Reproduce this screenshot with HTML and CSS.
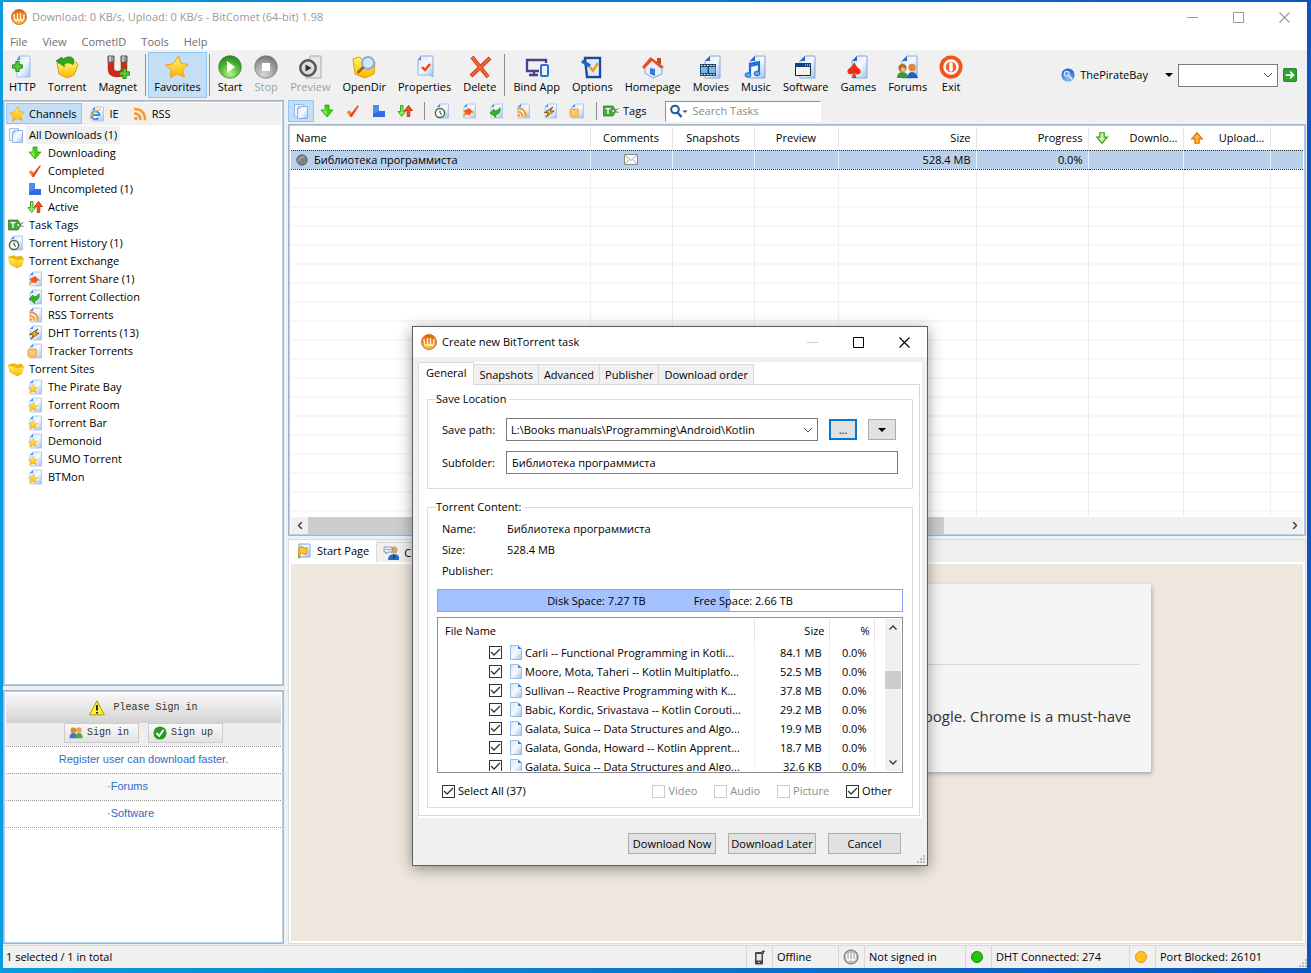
FILE: index.html
```html
<!DOCTYPE html>
<html lang="en">
<head>
    <meta charset="UTF-8">
    <title>BitComet (64-bit) 1.98</title>
    <link rel="stylesheet" href="styles.css">
</head>
<body>
    <svg class="sprite" aria-hidden="true">
        <defs>
            <linearGradient id="gPage" x1="0" y1="0" x2="1" y2="1"><stop offset="0" stop-color="#d3e4fa"/><stop offset=".5" stop-color="#f6faff"/><stop offset="1" stop-color="#9fc0ee"/></linearGradient>
            <linearGradient id="gGold" x1="0" y1="0" x2="0" y2="1"><stop offset="0" stop-color="#fff36a"/><stop offset="1" stop-color="#ffb400"/></linearGradient>
            <linearGradient id="gLogo" x1="0" y1="0" x2="0" y2="1"><stop offset="0" stop-color="#d9641a"/><stop offset=".6" stop-color="#f09426"/><stop offset="1" stop-color="#ffc23a"/></linearGradient>
            <radialGradient id="gGreen" cx=".5" cy=".8" r=".8"><stop offset="0" stop-color="#b9f08d"/><stop offset=".6" stop-color="#4db035"/><stop offset="1" stop-color="#2c8420"/></radialGradient>
            <radialGradient id="gGray" cx=".4" cy=".8" r=".9"><stop offset="0" stop-color="#d8d8d8"/><stop offset=".6" stop-color="#999"/><stop offset="1" stop-color="#666"/></radialGradient>
            <radialGradient id="gBlue" cx=".5" cy=".8" r=".8"><stop offset="0" stop-color="#8fc2ff"/><stop offset="1" stop-color="#2355cc"/></radialGradient>
        </defs>
        <symbol id="logo" viewBox="0 0 16 16"><circle cx="8" cy="8" r="7.500" fill="url(#gLogo)" stroke="#c9560f" stroke-width=".8"/><path d="M3 5l.5 5 1.700 2L6.500 10V4M6.500 10L8 12l1.500-2V4M9.500 10l1.500 2 1.700-2 .4-5" fill="none" stroke="#fff1d0" stroke-width="1.300" stroke-linejoin="round"/></symbol>
        <symbol id="page" viewBox="0 0 16 16"><path d="M6 1h8.500v14H3V4z" fill="url(#gPage)" stroke="#a3c0ea" stroke-width=".8"/><path d="M6 1v3H3z" fill="#4d8be0"/></symbol>
        <symbol id="pages" viewBox="0 0 16 16"><path d="M1.500 1.500h9v12h-9z" fill="#eef5fd" stroke="#9fbce6"/><path d="M6.500 3.500h8v12h-10V5.500z" fill="url(#gPage)" stroke="#8fb0e2"/><path d="M6.500 3.500v2h-2z" fill="#4d8be0"/></symbol>
        <symbol id="down" viewBox="0 0 16 16"><path d="M6 2h4v5h4l-6 7-6-7h4z" fill="#3fd40d" stroke="#2c9a12" stroke-width=".8"/><path d="M6.500 2.500v5l-3 .3L8 13z" fill="#8fe94c"/></symbol>
        <symbol id="check" viewBox="0 0 16 16"><path d="M2 9l2.500-1.500L6.500 10 12.500 2.500l1.500.3L7 14H5.500z" fill="#f0401c"/><path d="M2 9l2.500-1.500L6 10l-1 3z" fill="#f58a32"/></symbol>
        <symbol id="partial" viewBox="0 0 16 16"><path d="M2 2h6v6h6v6H2z" fill="#2f6de6"/><path d="M2 2h6v6l-6 3z" fill="#4e8af0"/></symbol>
        <symbol id="active" viewBox="0 0 16 16"><path d="M3.500 2.500h2.500v6h2.500L4.700 13.500 1 8.500h2.500z" fill="#9be85c" stroke="#2d9a17" stroke-width=".9"/><path d="M10.200 13.500h2.600v-6h2.700L11.500 2.500 7.500 7.500h2.700z" fill="#f2501d" stroke="#b8340d" stroke-width=".9"/></symbol>
        <symbol id="tag" viewBox="0 0 16 16"><path d="M.5 3h9.500l3 5-3 5H.5z" fill="#49a83c" stroke="#2c8529" stroke-width=".8"/><path d="M2.500 5.700h5M5 6v5" stroke="#fff" stroke-width="1.300"/><circle cx="10.300" cy="8" r=".9" fill="#fff"/><path d="M11 8l4.500-2.500M12 8.500l3.500 1" stroke="#777" fill="none"/></symbol>
        <symbol id="history" viewBox="0 0 16 16"><use href="#page"/><circle cx="6" cy="10" r="4.600" fill="#fff" stroke="#407246" stroke-width="1.500"/><path d="M6 7.500V10l2 1.500" fill="none" stroke="#333"/></symbol>
        <symbol id="folder" viewBox="0 0 16 16"><path d="M.5 4l6-1.500L8 4l5.500-1L15.500 6l-2 7-4.500 2L2 11z" fill="#f5b800" stroke="#dda000" stroke-width=".6"/><path d="M.5 4.500L10 7.500l5.500-1.500-2 7L9 15l-7-4z" fill="url(#gGold)"/></symbol>
        <symbol id="share" viewBox="0 0 16 16"><use href="#page"/><path d="M2 14l2-5-2-.5L8 5l5 4.500-3 .2-1 2.500-3-.8z" fill="#f4591d"/><path d="M2 14l2-4 2 2z" fill="#ffb33a"/></symbol>
        <symbol id="collect" viewBox="0 0 16 16"><use href="#page"/><path d="M2 10l4-4 .5 2q4-.5 5.500-3.500 1.500 6-4.500 7.500l.5 2.500z" fill="#2fb61e" stroke="#187d12" stroke-width=".6"/></symbol>
        <symbol id="wave" viewBox="0 0 16 16"><circle cx="4" cy="12.500" r="1.800"/><path d="M2 7.500q6.500 0 6.500 6.800M2 3q11 0 11 11.300" fill="none" stroke="currentColor" stroke-width="2.600"/></symbol>
        <symbol id="rsspage" viewBox="0 0 16 16"><use href="#page"/><g fill="#f79a26" color="#f79a26"><use href="#wave" x="1" y="3" width="12" height="12"/></g></symbol>
        <symbol id="dht" viewBox="0 0 16 16"><use href="#page"/><path d="M11 4L2.500 9.500l4 .2L4 14l8-6H8z" fill="#ffc62b" stroke="#6b3a12" stroke-width=".9"/></symbol>
        <symbol id="tracker" viewBox="0 0 16 16"><use href="#page"/><rect x="1" y="6" width="8.500" height="8" rx="1" fill="#fbc062" stroke="#e79a32" stroke-width=".7"/><path d="M3 8l5 4M3 12l4-4" stroke="#fde1ae" stroke-width=".6"/></symbol>
        <symbol id="star" viewBox="0 0 24 24"><path d="M13.500 1l2.300 7.300L23 9.500l-5.500 5.300L19.500 22l-7.200-3.200L5.500 22.500l.8-7.300L.8 10l7.400-1.200z" fill="url(#gGold)" stroke="#f19c14"/></symbol>
        <symbol id="site" viewBox="0 0 16 16"><use href="#page"/><use href="#star" x="1" y="4.500" width="10" height="10"/></symbol>
        <symbol id="ie" viewBox="0 0 16 16"><use href="#page"/><path d="M9.500 12A4 4 0 1 1 10.500 9H4" fill="none" stroke="#3a8ee0" stroke-width="1.900"/><path d="M1 13Q2 6 12 3" fill="none" stroke="#f3ba35" stroke-width="1.200"/></symbol>
        <symbol id="plus" viewBox="0 0 10 10"><path d="M3.500.5h3v3h3v3h-3v3h-3v-3h-3v-3h3z" fill="#55cf35" stroke="#228813" stroke-width=".9"/></symbol>
        <symbol id="http" viewBox="0 0 24 24"><path d="M9 1h11v21H7V7z" fill="url(#gPage)" stroke="#a3c0ea"/><path d="M10 1v4H7z" fill="#4d8be0"/><use href="#plus" x="2" y="6" width="11" height="11"/></symbol>
        <symbol id="torrent" viewBox="0 0 24 24"><path d="M2 8l19-1 2 3-4 10-7 3-8-4z" fill="url(#gGold)" stroke="#dda000"/><path d="M1 6l6-4 .3 2.500Q15-1 19 4.500l-1 5q-4-3-9-1l.5 3z" fill="#2fa81e" stroke="#187d12" stroke-width=".7"/></symbol>
        <symbol id="magnet" viewBox="0 0 24 24"><path d="M5 7v7q0 5 6.500 5t6.500-5V7" fill="none" stroke="#c92b18" stroke-width="6.500"/><path d="M2 1h6v6H2zM15 1h6v6h-6z" fill="#999" stroke="#555"/><path d="M4 1v6M17 1v6" stroke="#eee"/><use href="#plus" x="13" y="13" width="11" height="11"/></symbol>
        <symbol id="start" viewBox="0 0 24 24"><circle cx="12" cy="12" r="11.300" fill="url(#gGreen)" stroke="#2f8625" stroke-width=".7"/><path d="M9 6l8 6-8 6z" fill="#fff"/></symbol>
        <symbol id="stop" viewBox="0 0 24 24"><circle cx="12" cy="12" r="11.300" fill="url(#gGray)" stroke="#777" stroke-width=".7"/><path d="M8 8h8v8H8z" fill="#fff"/></symbol>
        <symbol id="preview" viewBox="0 0 24 24"><path d="M12 1h11v22H8z" fill="#e8e8e8" stroke="#aaa"/><circle cx="10" cy="13" r="7.700" fill="#ddd" stroke="#555" stroke-width="2.500"/><path d="M7.500 9.500l6 3.500-6 3.500z" fill="#333"/></symbol>
        <symbol id="opendir" viewBox="0 0 24 24"><path d="M1 4l6-2 3 2 13 3-1 12-9 4L3 19z" fill="url(#gGold)" stroke="#dda000"/><circle cx="16" cy="8" r="6" fill="#cde7fb" stroke="#86aed6" stroke-width="1.800"/><path d="M11.500 12l-6 6" stroke="#8d662a" stroke-width="2.500"/></symbol>
        <symbol id="props" viewBox="0 0 24 24"><path d="M8 1h12v21l-3-2H5V5z" fill="url(#gPage)" stroke="#8fb0e2"/><path d="M8 1v4H5z" fill="#4d8be0"/><path d="M9 12l3 3 5-6" fill="none" stroke="#f0401c" stroke-width="2.400"/></symbol>
        <symbol id="delete" viewBox="0 0 24 24"><path d="M4 2l16 20M22 3L3 21" stroke="#c93c14" stroke-width="4"/><path d="M4 2l16 20M22 3L3 21" stroke="#f26436" stroke-width="2.200"/></symbol>
        <symbol id="bind" viewBox="0 0 24 24"><path d="M14 16H2V5h19v3M4 20h9" fill="none" stroke="#4a3f91" stroke-width="2.300"/><path d="M9 16v4" stroke="#4a3f91" stroke-width="2.300"/><rect x="16" y="10" width="7" height="11" rx="1" fill="#eef4ff" stroke="#2a70dd" stroke-width="2"/></symbol>
        <symbol id="options" viewBox="0 0 24 24"><path d="M5 3h15v19H7z" fill="#fff" stroke="#194b9d" stroke-width="2.400"/><path d="M8 5h10v15H8z" fill="#dceafb"/><path d="M10 12l3 4 5-8" fill="none" stroke="#f39a20" stroke-width="2.400"/><path d="M2 6l8 5" stroke="#1e63c0" stroke-width="3.500"/></symbol>
        <symbol id="home" viewBox="0 0 24 24"><path d="M16 3h4v7h-4z" fill="#c44a2d"/><path d="M4 11l7-7 10 7v8l-9 4-8-5z" fill="#e2effd" stroke="#7fa5da"/><path d="M1 12L9.500 2 23 12l-3 1.500L11 6l-8 8z" fill="#ea4b22"/><path d="M9 13l5 1v7l-5-2z" fill="#3579db"/></symbol>
        <symbol id="bigpage" viewBox="0 0 24 24"><path d="M11 1h10v22H6V6z" fill="url(#gPage)" stroke="#86a9da"/><path d="M11 1v5H6z" fill="#2d67c9"/></symbol>
        <symbol id="movies" viewBox="0 0 24 24"><use href="#bigpage"/><path d="M1 9h16v12H1z" fill="#29455f"/><path d="M2 12h6.500v6H2zM10 12h6.500v6H10z" fill="#6abcf3"/><path d="M2 10.500h15M2 19.500h15" stroke="#fff" stroke-dasharray="1.500 1.500"/></symbol>
        <symbol id="music" viewBox="0 0 24 24"><use href="#bigpage"/><path d="M6 20V9l9-2v11" fill="none" stroke="#246bd0" stroke-width="2.200"/><path d="M6 11l9-2" stroke="#246bd0" stroke-width="2"/><ellipse cx="4" cy="20" rx="3" ry="2.300" fill="#59a7ef" stroke="#246bd0"/><ellipse cx="13" cy="18.500" rx="3" ry="2.300" fill="#59a7ef" stroke="#246bd0"/></symbol>
        <symbol id="software" viewBox="0 0 24 24"><use href="#bigpage"/><path d="M1.500 8.500h15v12h-15z" fill="#f6f3ea" stroke="#222"/><path d="M1 8h16v4H1z" fill="#143f86"/><path d="M11 10h5" stroke="#fff" stroke-dasharray="1 1"/></symbol>
        <symbol id="games" viewBox="0 0 24 24"><use href="#bigpage"/><path d="M8.500 7q1 4 5.500 7.500 2 4-2 5-2 0-3-1.500l1.500 5H6L7.500 18q-2 2-4.500 1-3-2-.5-5Q7 11 8.500 7z" fill="#f02c16"/></symbol>
        <symbol id="forums" viewBox="0 0 24 24"><use href="#bigpage"/><circle cx="6.500" cy="13" r="4" fill="#b06b25"/><circle cx="16" cy="12.500" r="3.700" fill="#d88a36"/><path d="M1 23q0-6 5.500-6t5.500 6z" fill="#3b982c"/><path d="M11 23q1-6 5-6t6 6z" fill="#245fb8"/><circle cx="7" cy="14.500" r="2.300" fill="#ecc08a"/></symbol>
        <symbol id="exit" viewBox="0 0 24 24"><circle cx="12" cy="12" r="11.500" fill="#f2531b"/><circle cx="12" cy="12" r="6.500" fill="#f4632a" stroke="#fff" stroke-width="2.500"/><path d="M12 9v6" stroke="#fff" stroke-width="3.500" stroke-linecap="round"/></symbol>
        <symbol id="globe" viewBox="0 0 16 16"><circle cx="8" cy="8" r="7.500" fill="url(#gBlue)"/><circle cx="6.500" cy="6.500" r="2.800" fill="#6ea3f2" stroke="#e2eefe" stroke-width="1.200"/><path d="M9 9l4 4" stroke="#e2eefe" stroke-width="1.800"/></symbol>
        <symbol id="go" viewBox="0 0 16 16"><rect x=".5" y=".5" width="15" height="15" rx="1.500" fill="#2fa12c" stroke="#17771a"/><path d="M3 8h8M8 4l4 4-4 4" fill="none" stroke="#fff" stroke-width="2"/></symbol>
        <symbol id="lens" viewBox="0 0 20 14"><circle cx="6" cy="5.500" r="3.800" fill="none" stroke="#1f5a9d" stroke-width="2"/><path d="M8.500 8.500l4 4.500" stroke="#1f5a9d" stroke-width="2.400"/><path d="M13.500 6.500h5L16 9z" fill="#1f4a85"/></symbol>
        <symbol id="outdown" viewBox="0 0 16 16"><path d="M5.500 2h5v5H14l-6 7-6-7h3.500z" fill="#cdf5a4" stroke="#3a9d1d" stroke-width="1.400"/></symbol>
        <symbol id="outup" viewBox="0 0 16 16"><path d="M5.500 14h5V9H14L8 2 2 9h3.500z" fill="#ffb13f" stroke="#e5720c" stroke-width="1.400"/></symbol>
        <symbol id="ball" viewBox="0 0 16 16"><circle cx="8" cy="8" r="7" fill="#808080" stroke="#4d4d4d"/><path d="M3 10q1-6 8-6" stroke="#a2a2a2" fill="none" stroke-width="2"/></symbol>
        <symbol id="mail" viewBox="0 0 14 11"><path d="M.5.5h13v10H.5z" fill="#fafafa" stroke="#8c8c80"/><path d="M1 1l6 5.500L13 1M1 10l4.500-4.500M13 10L8.500 5.500" fill="none" stroke="#aaa"/></symbol>
        <symbol id="flag" viewBox="0 0 16 16"><path d="M3 1h11v13H3z" fill="url(#gPage)" stroke="#86a9da"/><path d="M3 4.500q2-1.500 4 0t4 0v6q-2 1.500-4 0t-3 .5v4H2.500z" fill="#ffc83a" stroke="#cf8a12"/></symbol>
        <symbol id="chat" viewBox="0 0 16 16"><circle cx="11" cy="5" r="3.500" fill="#dba05a"/><path d="M5 15q0-6 6-6t5 6z" fill="#2a6cc4"/><path d="M1 2h8v5H5L3 9V7H1z" fill="#e9f2fd" stroke="#6688bb" stroke-width=".8"/><path d="M2.500 4.500h5" stroke="#456" stroke-dasharray="1 1"/><path d="M11 10v4" stroke="#123c7c" stroke-width="1.500"/></symbol>
        <symbol id="file" viewBox="0 0 12 15"><path d="M.5.5h7.500L11.500 4v10.500H.5z" fill="url(#gPage)" stroke="#9dbae8"/><path d="M8 .5V4h3.500z" fill="#2f7fd8"/></symbol>
        <symbol id="warn" viewBox="0 0 16 16"><path d="M8 .8l7.300 14H.7z" fill="#fff32b" stroke="#a99b0c"/><path d="M8 5v5.500M8 12v1.600" stroke="#111" stroke-width="1.800"/></symbol>
        <symbol id="users" viewBox="0 0 16 16"><circle cx="5" cy="5" r="3.200" fill="#d9893b"/><circle cx="11.300" cy="4.500" r="3.200" fill="#e8a353"/><path d="M.5 14q0-6 4.500-6t4.500 6z" fill="#3e78cc"/><path d="M7.500 14q0-6 4-6t4 6z" fill="#4fad3c"/></symbol>
        <symbol id="ok" viewBox="0 0 16 16"><circle cx="8" cy="8" r="7.500" fill="#249b1f"/><path d="M4 8l3 3.500L12 4.500" fill="none" stroke="#fff" stroke-width="2.200"/></symbol>
        <symbol id="phone" viewBox="0 0 16 16"><rect x="4" y="3" width="8" height="12.500" rx="1" fill="#444"/><path d="M5.500 5h5v6.500h-5z" fill="#e6e6e6"/><path d="M7 13.500h2" stroke="#bbb"/><path d="M12.500 1v4M10.500 2.500H14" stroke="#555"/></symbol>
        <symbol id="comet" viewBox="0 0 16 16"><circle cx="8" cy="8" r="7" fill="#bdbdbd" stroke="#6f6f6f"/><path d="M3.500 5l.5 5 1.200 1.500L6.500 10V4M6.500 10L8 11.500 9.500 10V4M9.500 10l1.300 1.500L12 10l.5-5" fill="none" stroke="#fff" stroke-width="1.200"/></symbol>
        <symbol id="min" viewBox="0 0 11 11"><path d="M0 5.500h11" stroke="currentColor"/></symbol>
        <symbol id="max" viewBox="0 0 11 11"><path d="M.5.5h10v10H.5z" fill="none" stroke="currentColor"/></symbol>
        <symbol id="close" viewBox="0 0 11 11"><path d="M.5.5l10 10M10.500.5l-10 10" stroke="currentColor" stroke-width="1.100"/></symbol>
        <symbol id="chev" viewBox="0 0 8 5"><path d="M.5.5L4 4 7.500.5" fill="none" stroke="currentColor" stroke-width="1.500"/></symbol>
        <symbol id="grip" viewBox="0 0 9 9"><path d="M7 0h2v2H7zM7 3h2v2H7zM7 6h2v2H7zM4 3h2v2H4zM4 6h2v2H4zM1 6h2v2H1z" fill="#bbb"/></symbol>
    </svg>

    <div class="window">
        <header class="titlebar">
            <svg class="ico"><use href="#logo"/></svg>
            <span class="caption">Download: 0 KB/s, Upload: 0 KB/s - BitComet (64-bit) 1.98</span>
            <button class="winbtn" aria-label="Minimize"><svg><use href="#min"/></svg></button>
            <button class="winbtn" aria-label="Maximize"><svg><use href="#max"/></svg></button>
            <button class="winbtn" aria-label="Close"><svg><use href="#close"/></svg></button>
        </header>

        <nav class="menubar">
            <button>File</button>
            <button>View</button>
            <button>CometID</button>
            <button>Tools</button>
            <button>Help</button>
        </nav>

        <div class="toolbar">
            <button class="tool"><svg><use href="#http"/></svg>HTTP</button>
            <button class="tool"><svg><use href="#torrent"/></svg>Torrent</button>
            <button class="tool"><svg><use href="#magnet"/></svg>Magnet</button>
            <span class="sep"></span>
            <button class="tool on"><svg><use href="#star"/></svg>Favorites</button>
            <span class="sep"></span>
            <button class="tool"><svg><use href="#start"/></svg>Start</button>
            <button class="tool" disabled><svg><use href="#stop"/></svg>Stop</button>
            <button class="tool" disabled><svg><use href="#preview"/></svg>Preview</button>
            <button class="tool"><svg><use href="#opendir"/></svg>OpenDir</button>
            <button class="tool"><svg><use href="#props"/></svg>Properties</button>
            <button class="tool"><svg><use href="#delete"/></svg>Delete</button>
            <span class="sep"></span>
            <button class="tool"><svg><use href="#bind"/></svg>Bind App</button>
            <button class="tool"><svg><use href="#options"/></svg>Options</button>
            <button class="tool"><svg><use href="#home"/></svg>Homepage</button>
            <button class="tool"><svg><use href="#movies"/></svg>Movies</button>
            <button class="tool"><svg><use href="#music"/></svg>Music</button>
            <button class="tool"><svg><use href="#software"/></svg>Software</button>
            <button class="tool"><svg><use href="#games"/></svg>Games</button>
            <button class="tool"><svg><use href="#forums"/></svg>Forums</button>
            <button class="tool"><svg><use href="#exit"/></svg>Exit</button>
            <div class="websearch">
                <button class="engine"><svg class="ico14"><use href="#globe"/></svg><span>ThePirateBay</span><i class="tri"></i></button>
                <select class="combo" aria-label="Search text"><option></option></select>
                <button class="plain" aria-label="Go"><svg class="ico14"><use href="#go"/></svg></button>
            </div>
        </div>

        <div class="main">
            <aside class="side">
                <section class="box channels">
                    <div class="sidetabs">
                        <button class="on"><svg class="ico"><use href="#star"/></svg>Channels</button>
                        <button><svg class="ico"><use href="#ie"/></svg>IE</button>
                        <button><svg class="ico rss"><use href="#wave"/></svg>RSS</button>
                    </div>
                    <ul class="tree">
                        <li><a href="#" class="sel"><svg class="ico"><use href="#pages"/></svg><span>All Downloads (1)</span></a>
                            <ul>
                                <li><a href="#"><svg class="ico"><use href="#down"/></svg><span>Downloading</span></a></li>
                                <li><a href="#"><svg class="ico"><use href="#check"/></svg><span>Completed</span></a></li>
                                <li><a href="#"><svg class="ico"><use href="#partial"/></svg><span>Uncompleted (1)</span></a></li>
                                <li><a href="#"><svg class="ico"><use href="#active"/></svg><span>Active</span></a></li>
                            </ul>
                        </li>
                        <li><a href="#"><svg class="ico"><use href="#tag"/></svg><span>Task Tags</span></a></li>
                        <li><a href="#"><svg class="ico"><use href="#history"/></svg><span>Torrent History (1)</span></a></li>
                        <li><a href="#"><svg class="ico"><use href="#folder"/></svg><span>Torrent Exchange</span></a>
                            <ul>
                                <li><a href="#"><svg class="ico"><use href="#share"/></svg><span>Torrent Share (1)</span></a></li>
                                <li><a href="#"><svg class="ico"><use href="#collect"/></svg><span>Torrent Collection</span></a></li>
                                <li><a href="#"><svg class="ico"><use href="#rsspage"/></svg><span>RSS Torrents</span></a></li>
                                <li><a href="#"><svg class="ico"><use href="#dht"/></svg><span>DHT Torrents (13)</span></a></li>
                                <li><a href="#"><svg class="ico"><use href="#tracker"/></svg><span>Tracker Torrents</span></a></li>
                            </ul>
                        </li>
                        <li><a href="#"><svg class="ico"><use href="#folder"/></svg><span>Torrent Sites</span></a>
                            <ul>
                                <li><a href="#"><svg class="ico"><use href="#site"/></svg><span>The Pirate Bay</span></a></li>
                                <li><a href="#"><svg class="ico"><use href="#site"/></svg><span>Torrent Room</span></a></li>
                                <li><a href="#"><svg class="ico"><use href="#site"/></svg><span>Torrent Bar</span></a></li>
                                <li><a href="#"><svg class="ico"><use href="#site"/></svg><span>Demonoid</span></a></li>
                                <li><a href="#"><svg class="ico"><use href="#site"/></svg><span>SUMO Torrent</span></a></li>
                                <li><a href="#"><svg class="ico"><use href="#site"/></svg><span>BTMon</span></a></li>
                            </ul>
                        </li>
                    </ul>
                </section>

                <section class="box account">
                    <div class="please"><svg class="ico"><use href="#warn"/></svg>Please Sign in</div>
                    <div class="signbtns">
                        <button><svg class="ico14"><use href="#users"/></svg>Sign in</button>
                        <button><svg class="ico14"><use href="#ok"/></svg>Sign up</button>
                    </div>
                    <a href="#" class="center">Register user can download faster.</a>
                    <a href="#" class="alt">·Forums</a>
                    <a href="#">·Software</a>
                </section>
            </aside>

            <section class="content">
                <div class="subbar">
                    <button class="on" aria-label="All"><svg class="ico"><use href="#pages"/></svg></button>
                    <button aria-label="Downloading"><svg class="ico"><use href="#down"/></svg></button>
                    <button aria-label="Completed"><svg class="ico"><use href="#check"/></svg></button>
                    <button aria-label="Uncompleted"><svg class="ico"><use href="#partial"/></svg></button>
                    <button aria-label="Active"><svg class="ico"><use href="#active"/></svg></button>
                    <span class="sep"></span>
                    <button class="wide" aria-label="History"><svg class="ico"><use href="#history"/></svg></button>
                    <button class="wide" aria-label="Share"><svg class="ico"><use href="#share"/></svg></button>
                    <button class="wide" aria-label="Collection"><svg class="ico"><use href="#collect"/></svg></button>
                    <button class="wide" aria-label="RSS"><svg class="ico"><use href="#rsspage"/></svg></button>
                    <button class="wide" aria-label="DHT"><svg class="ico"><use href="#dht"/></svg></button>
                    <button class="wide" aria-label="Tracker"><svg class="ico"><use href="#tracker"/></svg></button>
                    <span class="sep"></span>
                    <button class="tags"><svg class="ico"><use href="#tag"/></svg>Tags</button>
                    <label class="find"><svg><use href="#lens"/></svg><input type="text" placeholder="Search Tasks" aria-label="Search Tasks"></label>
                </div>

                <div class="box list">
                    <div class="listview">
                        <table class="tasks">
                            <colgroup><col class="w-name"><col class="w-82"><col class="w-82"><col class="w-84"><col class="w-size"><col class="w-prog"><col class="w-down"><col class="w-up"><col></colgroup>
                            <thead>
                                <tr><th class="left">Name</th><th>Comments</th><th>Snapshots</th><th>Preview</th><th class="right">Size</th><th class="right">Progress</th>
                                    <th><span class="speed"><svg class="ico14"><use href="#outdown"/></svg>Downlo...</span></th>
                                    <th><span class="speed"><svg class="ico14"><use href="#outup"/></svg>Upload...</span></th><th></th></tr>
                            </thead>
                            <tbody>
                                <tr class="picked"><td><span class="task"><svg><use href="#ball"/></svg>Библиотека программиста</span></td><td class="mid"><svg class="mail"><use href="#mail"/></svg></td><td></td><td></td><td class="right">528.4 MB</td><td class="right">0.0%</td><td></td><td></td><td></td></tr>
                                <tr class="rest"><td></td><td></td><td></td><td></td><td></td><td></td><td></td><td></td><td></td></tr>
                            </tbody>
                        </table>
                    </div>
                    <div class="hscroll">
                        <button aria-label="Scroll left"><svg class="chev l"><use href="#chev"/></svg></button>
                        <div class="htrack"><div class="hthumb"></div></div>
                        <button aria-label="Scroll right"><svg class="chev r"><use href="#chev"/></svg></button>
                    </div>
                </div>

                <div class="detail">
                    <div class="dtabs">
                        <button class="on"><svg class="ico"><use href="#flag"/></svg>Start Page</button>
                        <button><svg class="ico"><use href="#chat"/></svg>Chat</button>
                    </div>
                    <div class="page">
                        <article class="card">
                            <div class="cardhead"></div>
                            <p>Google. Chrome is a must-have</p>
                        </article>
                    </div>
                </div>
            </section>
        </div>

        <footer class="status">
            <span class="total">1 selected / 1 in total</span>
            <span class="st-ico"><svg class="ico"><use href="#phone"/></svg></span><span class="st-off">Offline</span>
            <span class="st-ico"><svg class="ico"><use href="#comet"/></svg></span><span class="st-sign">Not signed in</span>
            <span class="st-ico"><i class="led green"></i></span><span class="st-dht">DHT Connected: 274</span>
            <span class="st-ico"><i class="led amber"></i></span><span class="st-port">Port Blocked: 26101<svg class="grip"><use href="#grip"/></svg></span>
        </footer>
    </div>

    <div class="dialog" role="dialog" aria-labelledby="dlgTitle">
        <header class="dlgbar">
            <svg class="ico"><use href="#logo"/></svg>
            <span class="caption" id="dlgTitle">Create new BitTorrent task</span>
            <button class="winbtn" disabled aria-label="Minimize"><svg><use href="#min"/></svg></button>
            <button class="winbtn" aria-label="Maximize"><svg><use href="#max"/></svg></button>
            <button class="winbtn" aria-label="Close"><svg><use href="#close"/></svg></button>
        </header>

        <div class="tabs">
            <div class="tabrow" role="tablist">
                <button class="on" role="tab">General</button>
                <button role="tab">Snapshots</button>
                <button role="tab">Advanced</button>
                <button role="tab">Publisher</button>
                <button role="tab">Download order</button>
            </div>
            <div class="pane">
                <fieldset class="save">
                    <legend>Save Location</legend>
                    <div class="field">
                        <label for="savePath">Save path:</label>
                        <select id="savePath" class="combo"><option>L:\Books manuals\Programming\Android\Kotlin</option></select>
                        <button class="push focus">...</button>
                        <button class="push" aria-label="Recent folders"><i class="tri"></i></button>
                    </div>
                    <div class="field">
                        <label for="subfolder">Subfolder:</label>
                        <input type="text" id="subfolder" value="Библиотека программиста">
                    </div>
                </fieldset>

                <fieldset class="torrent">
                    <legend>Torrent Content:</legend>
                    <dl>
                        <dt>Name:</dt><dd>Библиотека программиста</dd>
                        <dt>Size:</dt><dd>528.4 MB</dd>
                        <dt>Publisher:</dt><dd></dd>
                    </dl>
                    <div class="disk"><span>Disk Space: 7.27 TB</span><span>Free Space: 2.66 TB</span></div>
                    <div class="filebox">
                        <div class="filescroll">
                            <table class="files">
                                <colgroup><col><col class="w-fsize"><col class="w-fpct"><col class="w-fpad"></colgroup>
                                <thead><tr><th>File Name</th><th class="right">Size</th><th class="right">%</th><th></th></tr></thead>
                                <tbody>
                                    <tr><td><label><input type="checkbox" checked><svg><use href="#file"/></svg><span>Carli -- Functional Programming in Kotli...</span></label></td><td class="right">84.1 MB</td><td class="right">0.0%</td><td></td></tr>
                                    <tr><td><label><input type="checkbox" checked><svg><use href="#file"/></svg><span>Moore, Mota, Taheri -- Kotlin Multiplatfo...</span></label></td><td class="right">52.5 MB</td><td class="right">0.0%</td><td></td></tr>
                                    <tr><td><label><input type="checkbox" checked><svg><use href="#file"/></svg><span>Sullivan -- Reactive Programming with K...</span></label></td><td class="right">37.8 MB</td><td class="right">0.0%</td><td></td></tr>
                                    <tr><td><label><input type="checkbox" checked><svg><use href="#file"/></svg><span>Babic, Kordic, Srivastava -- Kotlin Corouti...</span></label></td><td class="right">29.2 MB</td><td class="right">0.0%</td><td></td></tr>
                                    <tr><td><label><input type="checkbox" checked><svg><use href="#file"/></svg><span>Galata, Suica -- Data Structures and Algo...</span></label></td><td class="right">19.9 MB</td><td class="right">0.0%</td><td></td></tr>
                                    <tr><td><label><input type="checkbox" checked><svg><use href="#file"/></svg><span>Galata, Gonda, Howard -- Kotlin Apprent...</span></label></td><td class="right">18.7 MB</td><td class="right">0.0%</td><td></td></tr>
                                    <tr><td><label><input type="checkbox" checked><svg><use href="#file"/></svg><span>Galata, Suica -- Data Structures and Algo...</span></label></td><td class="right">32.6 KB</td><td class="right">0.0%</td><td></td></tr>
                                </tbody>
                            </table>
                        </div>
                        <div class="vscroll">
                            <button aria-label="Scroll up"><svg class="chev u"><use href="#chev"/></svg></button>
                            <div class="vtrack"><div class="vthumb"></div></div>
                            <button aria-label="Scroll down"><svg class="chev"><use href="#chev"/></svg></button>
                        </div>
                    </div>
                    <div class="checks">
                        <label class="all"><input type="checkbox" checked>Select All (37)</label>
                        <label class="off"><input type="checkbox" disabled>Video</label>
                        <label class="off"><input type="checkbox" disabled>Audio</label>
                        <label class="off"><input type="checkbox" disabled>Picture</label>
                        <label><input type="checkbox" checked>Other</label>
                    </div>
                </fieldset>
            </div>
        </div>

        <div class="actions">
            <button class="push">Download Now</button>
            <button class="push">Download Later</button>
            <button class="push cancel">Cancel</button>
        </div>
        <svg class="grip"><use href="#grip"/></svg>
    </div>
</body>
</html>
```
FILE: styles.css
```css
* { box-sizing: border-box; }
body { margin: 0; height: 100vh; padding: 2px 4px 5px 3px; background: linear-gradient(90deg, #0a9be0 0%, #0878cf 50%, #0a55c4 100%); color: #000; font: 11px/16px "Open Sans", "Noto Sans", sans-serif; overflow: hidden; }
button, input, select { font: inherit; color: inherit; margin: 0; }
button { background: none; border: none; padding: 0; white-space: nowrap; }
ul, dl, dd, p { margin: 0; padding: 0; list-style: none; }
a { color: inherit; text-decoration: none; }
svg { flex: none; display: block; }
table { border-collapse: collapse; table-layout: fixed; width: 100%; }
th { font-weight: normal; }
.sprite { width: 0; height: 0; }
.ico { width: 16px; height: 16px; }
.ico14 { width: 14px; height: 14px; }
.left { text-align: left; }
.right { text-align: right; }
.sep { width: 1px; background: #8f8f8f; flex: none; }
.tri { width: 0; height: 0; border: 4px solid transparent; border-top-color: #000; border-bottom: none; }

/* main window */
.window { height: 100%; display: flex; flex-direction: column; background: #f0f0f0; }
.titlebar, .dlgbar { display: flex; align-items: center; background: #fff; height: 30px; padding-left: 8px; }
.titlebar { color: #999; }
.caption { flex: 1; padding-left: 5px; }
.winbtn { width: 46px; height: 28px; display: flex; align-items: center; justify-content: center; }
.winbtn svg { width: 11px; height: 11px; }
.winbtn:disabled { color: #ccc; }

.menubar { display: flex; gap: 15px; background: #fff; height: 18px; padding: 2px 0 0 7px; color: #6d6d6d; }

.toolbar { display: flex; align-items: center; height: 50px; flex: none; }
.toolbar .sep { height: 42px; margin: 0 2px; }
.tool { display: flex; flex-direction: column; align-items: center; height: 46px; padding: 2px 5px 0; border: 1px solid transparent; }
.tool svg { width: 24px; height: 24px; }
.tool:disabled { color: #a0a0a0; }
.tool.on { background: #c4dff5; border-color: #91c6f0; }

.websearch { display: flex; align-items: center; margin-left: auto; padding-right: 10px; gap: 5px; }
.engine { display: flex; align-items: center; gap: 5px; }
.engine .tri { margin-left: 12px; }
.combo { appearance: none; height: 23px; width: 100px; border: 1px solid #7a7a7a; border-radius: 0; padding: 0 20px 0 4px; background: #fff url("data:image/svg+xml,%3Csvg xmlns='http://www.w3.org/2000/svg' width='10' height='6'%3E%3Cpath d='M1 1l4 4 4-4' fill='none' stroke='%23555'/%3E%3C/svg%3E") no-repeat right 4px center; }

.main { flex: 1; min-height: 0; display: flex; gap: 4px; padding: 0 1px 1px 0; }
.box { border: 1px solid #a3b4c6; outline: 1px solid #b5d0ec; outline-offset: -2px; padding: 2px; background: #fff; }

/* left side */
.side { width: 281px; flex: none; display: flex; flex-direction: column; gap: 4px; }
.channels { flex: 1; min-height: 0; overflow: hidden; }
.account { height: 254px; }
.sidetabs { display: flex; gap: 4px; height: 22px; padding-bottom: 1px; background: #f0f0f0; }
.sidetabs button { display: flex; align-items: center; gap: 4px; padding: 0 5px 0 2px; border: 1px solid transparent; }
.sidetabs .on { background: #c4dff5; border-color: #91c6f0; }
.rss { fill: #f79a26; color: #f79a26; }
.tree { padding: 1px 0 0 2px; }
.tree ul { padding-left: 19px; }
.tree a { display: flex; align-items: center; height: 18px; gap: 2px; }
.tree a span { padding: 0 3px; line-height: 18px; }
.tree .sel span { background: #f0f0f0; }

.please { display: flex; align-items: center; justify-content: center; gap: 8px; height: 30px; background: linear-gradient(#f8f8f8, #d3d3d3); color: #333; font: 10px/16px "Liberation Mono", monospace; }
.signbtns { display: flex; justify-content: center; gap: 9px; height: 23px; padding-bottom: 3px; background: #eee; color: #333; }
.signbtns button { display: flex; align-items: center; gap: 4px; padding: 0 9px 0 4px; border: 1px solid #ccc; background: linear-gradient(#fafafa, #e2e2e2); font: 10px/16px "Liberation Mono", monospace; }
.account a { display: block; height: 27px; padding: 4px 0 0 101px; border-top: 1px dotted #999; color: #2f6cc4; font: 11px/16px "Liberation Sans", Arial, sans-serif; }
.account a.center { padding-left: 0; text-align: center; }
.account a.alt { background: #f7f7f7; }
.account a:last-child { height: 28px; border-bottom: 1px dotted #999; }

/* right side */
.content { flex: 1; min-width: 0; display: flex; flex-direction: column; }
.subbar { display: flex; align-items: center; height: 24px; padding-bottom: 2px; flex: none; }
.subbar button { width: 26px; height: 22px; display: flex; align-items: center; justify-content: center; border: 1px solid transparent; }
.subbar button.wide { width: 27px; }
.subbar .on { background: #c4dff5; border-color: #91c6f0; }
.subbar .sep { height: 18px; margin: 0 3px 0 6px; }
.subbar button.tags { width: auto; gap: 4px; padding: 0 2px; }
.find { display: flex; align-items: center; width: 156px; height: 21px; margin-left: 16px; padding-left: 3px; background: #fff; border: 1px solid #8f8f8f; border-right-color: #fff; border-bottom-color: #fff; }
.find svg { width: 20px; height: 14px; }
.find input { border: none; outline: none; width: 120px; padding: 0 3px; background: none; }
.find input::placeholder { color: #8a8a8a; }

.list { height: 412px; padding-bottom: 1px; display: flex; flex-direction: column; }
.listview { flex: 1; min-height: 0; overflow: hidden; }
.tasks { height: 100%; }
.w-name { width: 299px; }
.w-82 { width: 82px; }
.w-84 { width: 84px; }
.w-size { width: 138px; }
.w-prog { width: 112px; }
.w-down { width: 95px; }
.w-up { width: 87px; }
.tasks th { height: 23px; padding: 0 5px; border-right: 1px solid #e5e5e5; }
.tasks td { padding: 0 5px; border-right: 1px solid #eaeef6; }
.tasks th:last-child, .tasks td:last-child { border-right: none; }
.speed { display: flex; align-items: center; justify-content: space-between; padding-left: 1px; }
.picked td { height: 19px; line-height: 17px; background: #b9d1ea; border-top: 1px dotted #333; border-bottom: 1px dotted #333; }
.task { display: flex; align-items: center; gap: 6px; }
.task svg { width: 12px; height: 12px; }
.mail { width: 14px; height: 11px; margin: 0 auto; }
.rest td { background: repeating-linear-gradient(#fff 0 18px, #efefef 18px 19px); }

.hscroll { display: flex; height: 17px; background: #f0f0f0; color: #444; }
.hscroll button { width: 17px; display: flex; align-items: center; justify-content: center; }
.htrack { flex: 1; }
.hthumb { width: 65%; height: 100%; background: #cdcdcd; }
.chev { width: 8px; height: 5px; }
.chev.l { transform: rotate(90deg); }
.chev.r { transform: rotate(-90deg); }
.chev.u { transform: rotate(180deg); }

.detail { flex: 1; min-height: 0; display: flex; flex-direction: column; margin-top: 3px; border: 1px solid #dcdcdc; }
.dtabs { display: flex; align-items: flex-end; height: 22px; }
.dtabs button { display: flex; align-items: center; gap: 5px; height: 20px; padding: 0 6px; border: 1px solid #d9d9d9; border-bottom: none; }
.dtabs .on { height: 22px; padding-bottom: 2px; background: #fff; border-color: #fff; }
.page { flex: 1; border: 2px solid #fff; background: #efe7de; padding: 20px 152px 0 20px; }
.card { width: 80%; height: 188px; margin-left: auto; padding: 0 11px; background: #f5f5f5; box-shadow: 1px 2px 4px #aaa; text-align: right; }
.cardhead { height: 81px; border-bottom: 1px solid #d5d5d5; }
.card p { padding: 39px 9px 0 0; font: 15px/24px "Open Sans", sans-serif; color: #333; }

/* status bar */
.status { display: flex; height: 23px; flex: none; border-top: 1px solid #d7d7d7; line-height: 22px; }
.status > span { border-left: 1px solid #d7d7d7; padding-left: 4px; white-space: nowrap; }
.status .total { flex: 1; border: none; padding-left: 3px; }
.status .st-ico { width: 26px; display: flex; align-items: center; }
.st-off { width: 66px; }
.st-sign { width: 101px; }
.st-dht { width: 138px; }
.st-port { width: 152px; display: flex; justify-content: space-between; }
.led { width: 12px; height: 12px; margin-left: 1px; border-radius: 50%; }
.green { background: #25c40c; border: 1px solid #138a08; }
.amber { background: #ffc21a; border: 1px solid #e39410; }
.grip { width: 9px; height: 9px; align-self: flex-end; }

/* task dialog */
.dialog { position: absolute; left: 412px; top: 326px; width: 516px; height: 540px; display: flex; flex-direction: column; background: #f0f0f0; border: 1px solid #5f5f5f; box-shadow: 0 3px 14px rgba(0,0,0,.4); }
.tabs { margin: 5px 5px 0; padding-right: 2px; background: #fff; }
.tabrow { display: flex; align-items: flex-end; height: 22px; }
.tabrow button { height: 20px; padding: 0 5px; background: #f0f0f0; border: 1px solid #d9d9d9; border-left: none; border-bottom: none; }
.tabrow button.on { height: 23px; padding: 0 7px 3px; background: #fff; border-left: 1px solid #d9d9d9; margin-bottom: -1px; }
.pane { border: 1px solid #d9d9d9; height: 432px; padding: 6px 6px 0 8px; margin-bottom: 2px; }
fieldset { margin: 0; border: 1px solid #dcdcdc; padding: 0 9px; }
legend { margin-left: -1px; padding: 0 3px 0 0; }
.save { height: 98px; padding-left: 14px; padding-right: 14px; }
.save legend { margin-left: -6px; }
.field { display: flex; align-items: center; height: 23px; margin: 11px 0 10px; }
.field + .field { margin-top: 0; }
.field label { width: 64px; }
.field .combo { width: 312px; padding-left: 4px; }
.field input { flex: 1; min-width: 0; height: 23px; border: 1px solid #7a7a7a; padding: 0 5px; }
.push { display: flex; align-items: center; justify-content: center; height: 21px; background: #e1e1e1; border: 1px solid #adadad; }
.field .push { width: 28px; margin-left: 11px; }
.push.focus { border: 2px solid #0078d7; }
.torrent { margin-top: 10px; height: 309px; }
.torrent dl { display: grid; grid-template-columns: 65px 1fr; grid-auto-rows: 21px; padding: 6px 0 0 5px; }
.disk { display: flex; justify-content: center; gap: 48px; height: 23px; line-height: 21px; margin-top: 5px; border: 1px solid #7aa7f5; background: linear-gradient(90deg, #a3c2ff 63%, #fff 63%); }
.filebox { display: flex; height: 156px; margin-top: 5px; padding: 1px; border: 1px solid #8e8e8e; }
.filescroll { flex: 1; overflow: hidden; }
.w-fsize { width: 75px; }
.w-fpct { width: 45px; }
.w-fpad { width: 11px; }
.files th { height: 24px; text-align: left; padding: 0 4px 0 6px; border-right: 1px solid #e5e5e5; }
.files th.right { text-align: right; }
.files td { height: 19px; line-height: 19px; padding: 0 7px; border-right: 1px solid #f0f4fa; white-space: nowrap; }
.files td:first-child { padding: 0 0 0 50px; }
.files th:last-child, .files td:last-child { border: none; }
.files label { display: flex; align-items: center; }
.files label svg { width: 12px; height: 15px; margin: 0 3px 0 8px; }
.vscroll { width: 16px; display: flex; flex-direction: column; background: #f0f0f0; color: #444; }
.vscroll button { height: 17px; display: flex; align-items: center; justify-content: center; }
.vtrack { flex: 1; padding-top: 35px; }
.vthumb { height: 18px; background: #cdcdcd; }
input[type=checkbox] { appearance: none; flex: none; width: 13px; height: 13px; border: 1px solid #333; background: #fff; }
input[type=checkbox]:checked { background: #fff url("data:image/svg+xml,%3Csvg xmlns='http://www.w3.org/2000/svg' width='11' height='11'%3E%3Cpath d='M1 5l3 3 6-6' fill='none' stroke='%23333' stroke-width='1.300'/%3E%3C/svg%3E") no-repeat; }
input[type=checkbox]:disabled { border-color: #ccc; }
.checks { display: flex; gap: 17px; padding: 10px 11px 0 5px; }
.checks label { display: flex; align-items: center; gap: 3px; }
.checks .all { margin-right: auto; }
.off { color: #8d8d8d; }
.actions { display: flex; justify-content: flex-end; gap: 12px; padding: 15px 26px 0 0; flex: 1; }
.actions .push { width: 88px; }
.actions .push.cancel { width: 73px; }
.dialog > .grip { margin: 0 2px 1px 0; }
```
